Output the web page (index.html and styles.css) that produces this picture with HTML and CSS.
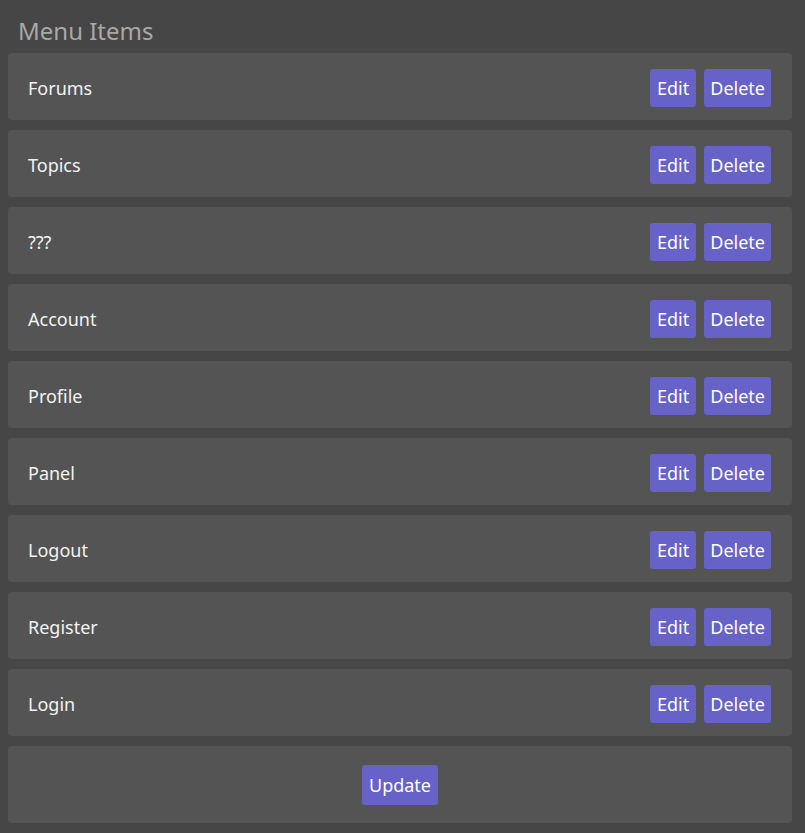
FILE: index.html
```html
<!DOCTYPE html>
<html>
<head>
<meta charset="utf-8">
<link rel="stylesheet" href="styles.css">
</head>
<body>
<div class="page">
  <h2 class="title">Menu Items</h2>
  <div class="list">
    <div class="item"><span class="name">Forums</span><div class="actions"><button class="btn">Edit</button><button class="btn">Delete</button></div></div>
    <div class="item"><span class="name">Topics</span><div class="actions"><button class="btn">Edit</button><button class="btn">Delete</button></div></div>
    <div class="item"><span class="name">???</span><div class="actions"><button class="btn">Edit</button><button class="btn">Delete</button></div></div>
    <div class="item"><span class="name">Account</span><div class="actions"><button class="btn">Edit</button><button class="btn">Delete</button></div></div>
    <div class="item"><span class="name">Profile</span><div class="actions"><button class="btn">Edit</button><button class="btn">Delete</button></div></div>
    <div class="item"><span class="name">Panel</span><div class="actions"><button class="btn">Edit</button><button class="btn">Delete</button></div></div>
    <div class="item"><span class="name">Logout</span><div class="actions"><button class="btn">Edit</button><button class="btn">Delete</button></div></div>
    <div class="item"><span class="name">Register</span><div class="actions"><button class="btn">Edit</button><button class="btn">Delete</button></div></div>
    <div class="item"><span class="name">Login</span><div class="actions"><button class="btn">Edit</button><button class="btn">Delete</button></div></div>
    <div class="item footer"><button class="btn update">Update</button></div>
  </div>
</div>
</body>
</html>
```
FILE: styles.css
```css
html, body {
  margin: 0;
  padding: 0;
  background: #464646;
}
body {
  font-family: "Noto Sans", "Open Sans", sans-serif;
}
.page {
  width: 784px;
  padding: 0 13px 0 8px;
}
.title {
  margin: 0;
  padding: 16px 0 0 10px;
  height: 53px;
  box-sizing: border-box;
  font-size: 24px;
  font-weight: 400;
  line-height: 30px;
  color: #a8a8a8;
}
.list {
  display: flex;
  flex-direction: column;
  gap: 10px;
}
.item {
  display: flex;
  align-items: center;
  justify-content: space-between;
  background: #545454;
  border-radius: 4px;
  height: 67px;
  box-sizing: border-box;
  padding: 3px 21px 0 20px;
}
.name {
  color: #f2f2f2;
  font-size: 18px;
}
.actions {
  display: flex;
  gap: 8px;
}
.btn {
  font-family: inherit;
  font-size: 18px;
  color: #ffffff;
  background: #6662c8;
  border: none;
  border-radius: 3px;
  height: 38px;
  padding: 0 7px;
  line-height: 38px;
  cursor: pointer;
}
.actions .btn + .btn {
  padding: 0 6px;
}
.footer {
  justify-content: center;
  height: 77px;
  padding: 0;
}
.update {
  height: 40px;
  line-height: 40px;
}
```
